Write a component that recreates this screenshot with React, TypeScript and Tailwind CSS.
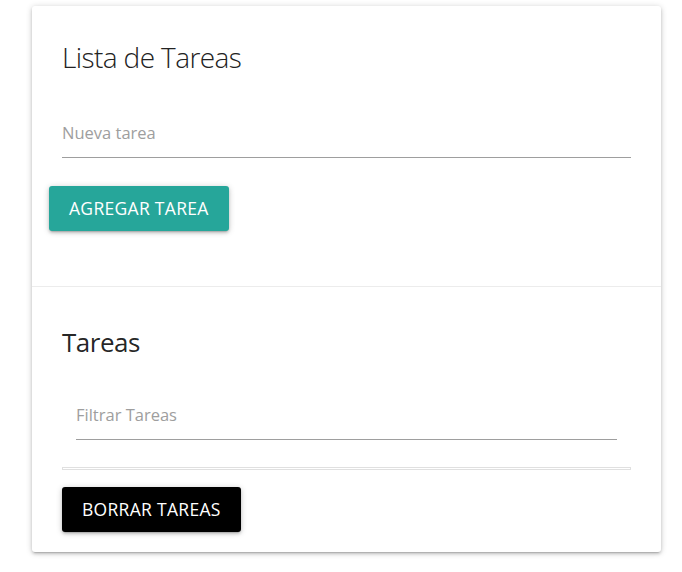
import React from 'react';

const App: React.FC = () => {
  return (
    <div className="min-h-[572px] bg-white pt-[6px] pl-[32px] font-['Open_Sans',sans-serif]">
      <div className="w-[629px] rounded-[3px] bg-white shadow-[0_2px_3px_0_rgba(0,0,0,0.14),0_3px_1px_-2px_rgba(0,0,0,0.12),0_1px_6px_0_rgba(0,0,0,0.2)]">
        {/* Nueva tarea */}
        <div className="px-[30px] pt-[31px] pb-[55px]">
          <h1 className="text-[28px] font-light leading-[40px] tracking-[-0.6px] text-[#222]">Lista de Tareas</h1>
          <input
            type="text"
            placeholder="Nueva tarea"
            className="mt-[21px] block h-[60px] w-full border-b border-[#9e9e9e] bg-transparent pt-[10px] text-[16.5px] text-[#333] outline-none placeholder:text-[#9e9e9e]"
          />
          <button className="mt-[28px] -ml-[13px] block h-[45px] rounded-[3px] bg-[#26a69a] px-[20px] text-[17.5px] uppercase tracking-[0.3px] text-white shadow-[0_2px_3px_0_rgba(0,0,0,0.14),0_3px_1px_-2px_rgba(0,0,0,0.12),0_1px_6px_0_rgba(0,0,0,0.2)]">
            Agregar tarea
          </button>
        </div>

        {/* Tareas */}
        <div className="border-t border-[rgba(160,160,160,0.2)] px-[30px] pt-[35px] pb-[20px]">
          <h2 className="text-[26px] font-normal leading-[40px] tracking-[-0.5px] text-[rgba(0,0,0,0.87)]">Tareas</h2>
          <div className="px-[14px]">
            <input
              type="text"
              placeholder="Filtrar Tareas"
              className="mt-[18px] block h-[60px] w-full border-b border-[#9e9e9e] bg-transparent pt-[10px] text-[16.5px] text-[#333] outline-none placeholder:text-[#9e9e9e]"
            />
          </div>
          <ul className="mt-[27px] h-[3px] border border-[#e0e0e0]"></ul>
          <button className="mt-[17px] block h-[45px] rounded-[3px] bg-black px-[20px] text-[17.5px] uppercase tracking-[0.3px] text-white shadow-[0_2px_3px_0_rgba(0,0,0,0.14),0_3px_1px_-2px_rgba(0,0,0,0.12),0_1px_6px_0_rgba(0,0,0,0.2)]">
            Borrar tareas
          </button>
        </div>
      </div>
    </div>
  );
};

export default App;
